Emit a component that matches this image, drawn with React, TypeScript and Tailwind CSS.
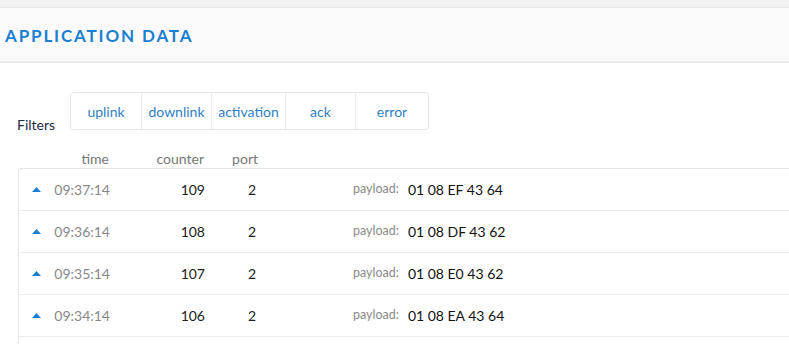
import React from "react";

const rows = [
  { time: "09:37:14", counter: "109", port: "2", payload: "01 08 EF 43 64" },
  { time: "09:36:14", counter: "108", port: "2", payload: "01 08 DF 43 62" },
  { time: "09:35:14", counter: "107", port: "2", payload: "01 08 E0 43 62" },
  { time: "09:34:14", counter: "106", port: "2", payload: "01 08 EA 43 64" },
];

const filters = [
  { label: "uplink", w: "w-[71px]" },
  { label: "downlink", w: "w-[70px]" },
  { label: "activation", w: "w-[74px]" },
  { label: "ack", w: "w-[70px]" },
  { label: "error", w: "w-[72px]" },
];

export default function App() {
  return (
    <div
      className="w-[789px] h-[344px] overflow-hidden bg-white"
      style={{ fontFamily: "Lato, 'Noto Sans', sans-serif" }}
    >
      <div className="h-[8px] bg-[#f1f1f1] border-b border-[#e9e9e9]" />
      <div className="h-[55px] bg-[#fafafa] border-b-2 border-[#ececec] flex items-center pl-[5px]">
        <h1 className="text-[17px] font-bold tracking-[1.85px] text-[#1a7fd1] leading-none mt-[2px]">
          APPLICATION DATA
        </h1>
      </div>

      <div className="flex items-end mt-[29px]">
        <div className="pl-[17px] w-[70px] text-[14px] text-[#1d2b45] leading-none mb-[-2px]">
          Filters
        </div>
        <div className="flex h-[38px] border border-[#e5e5e5] rounded-[4px] bg-white">
          {filters.map((f, i) => (
            <div
              key={f.label}
              className={`${f.w} flex items-center justify-center text-[14px] text-[#2f7fc4] ${
                i < filters.length - 1 ? "border-r border-[#e8e8e8]" : ""
              }`}
            >
              {f.label}
            </div>
          ))}
        </div>
      </div>

      <div className="flex items-center h-[20px] mt-[18px] pl-[40px] text-[14px] text-[#777]">
        <div className="w-[69px] text-right">time</div>
        <div className="w-[95px] text-right">counter</div>
        <div className="w-[54px] text-right">port</div>
      </div>

      <div className="ml-[18px] w-[800px] border-l border-t border-[#e6e6e6] rounded-tl-[4px]">
        {rows.map((r) => (
          <div
            key={r.time}
            className="flex items-center h-[42px] border-b border-[#ededed] text-[14px]"
          >
            <svg width="9" height="5" viewBox="0 0 9 5" className="ml-[13px] shrink-0">
              <polygon points="4.5,0 9,5 0,5" fill="#1a7fd4" />
            </svg>
            <div className="w-[69px] text-right text-[#888]">{r.time}</div>
            <div className="w-[95px] text-right text-[#222]">{r.counter}</div>
            <div className="w-[51px] text-right text-[#222]">{r.port}</div>
            <div className="ml-[97px] text-[12.5px] text-[#8a8a8a]">payload:</div>
            <div className="ml-[9px] text-[#111]">{r.payload}</div>
          </div>
        ))}
        <div className="h-[20px]" />
      </div>
    </div>
  );
}
